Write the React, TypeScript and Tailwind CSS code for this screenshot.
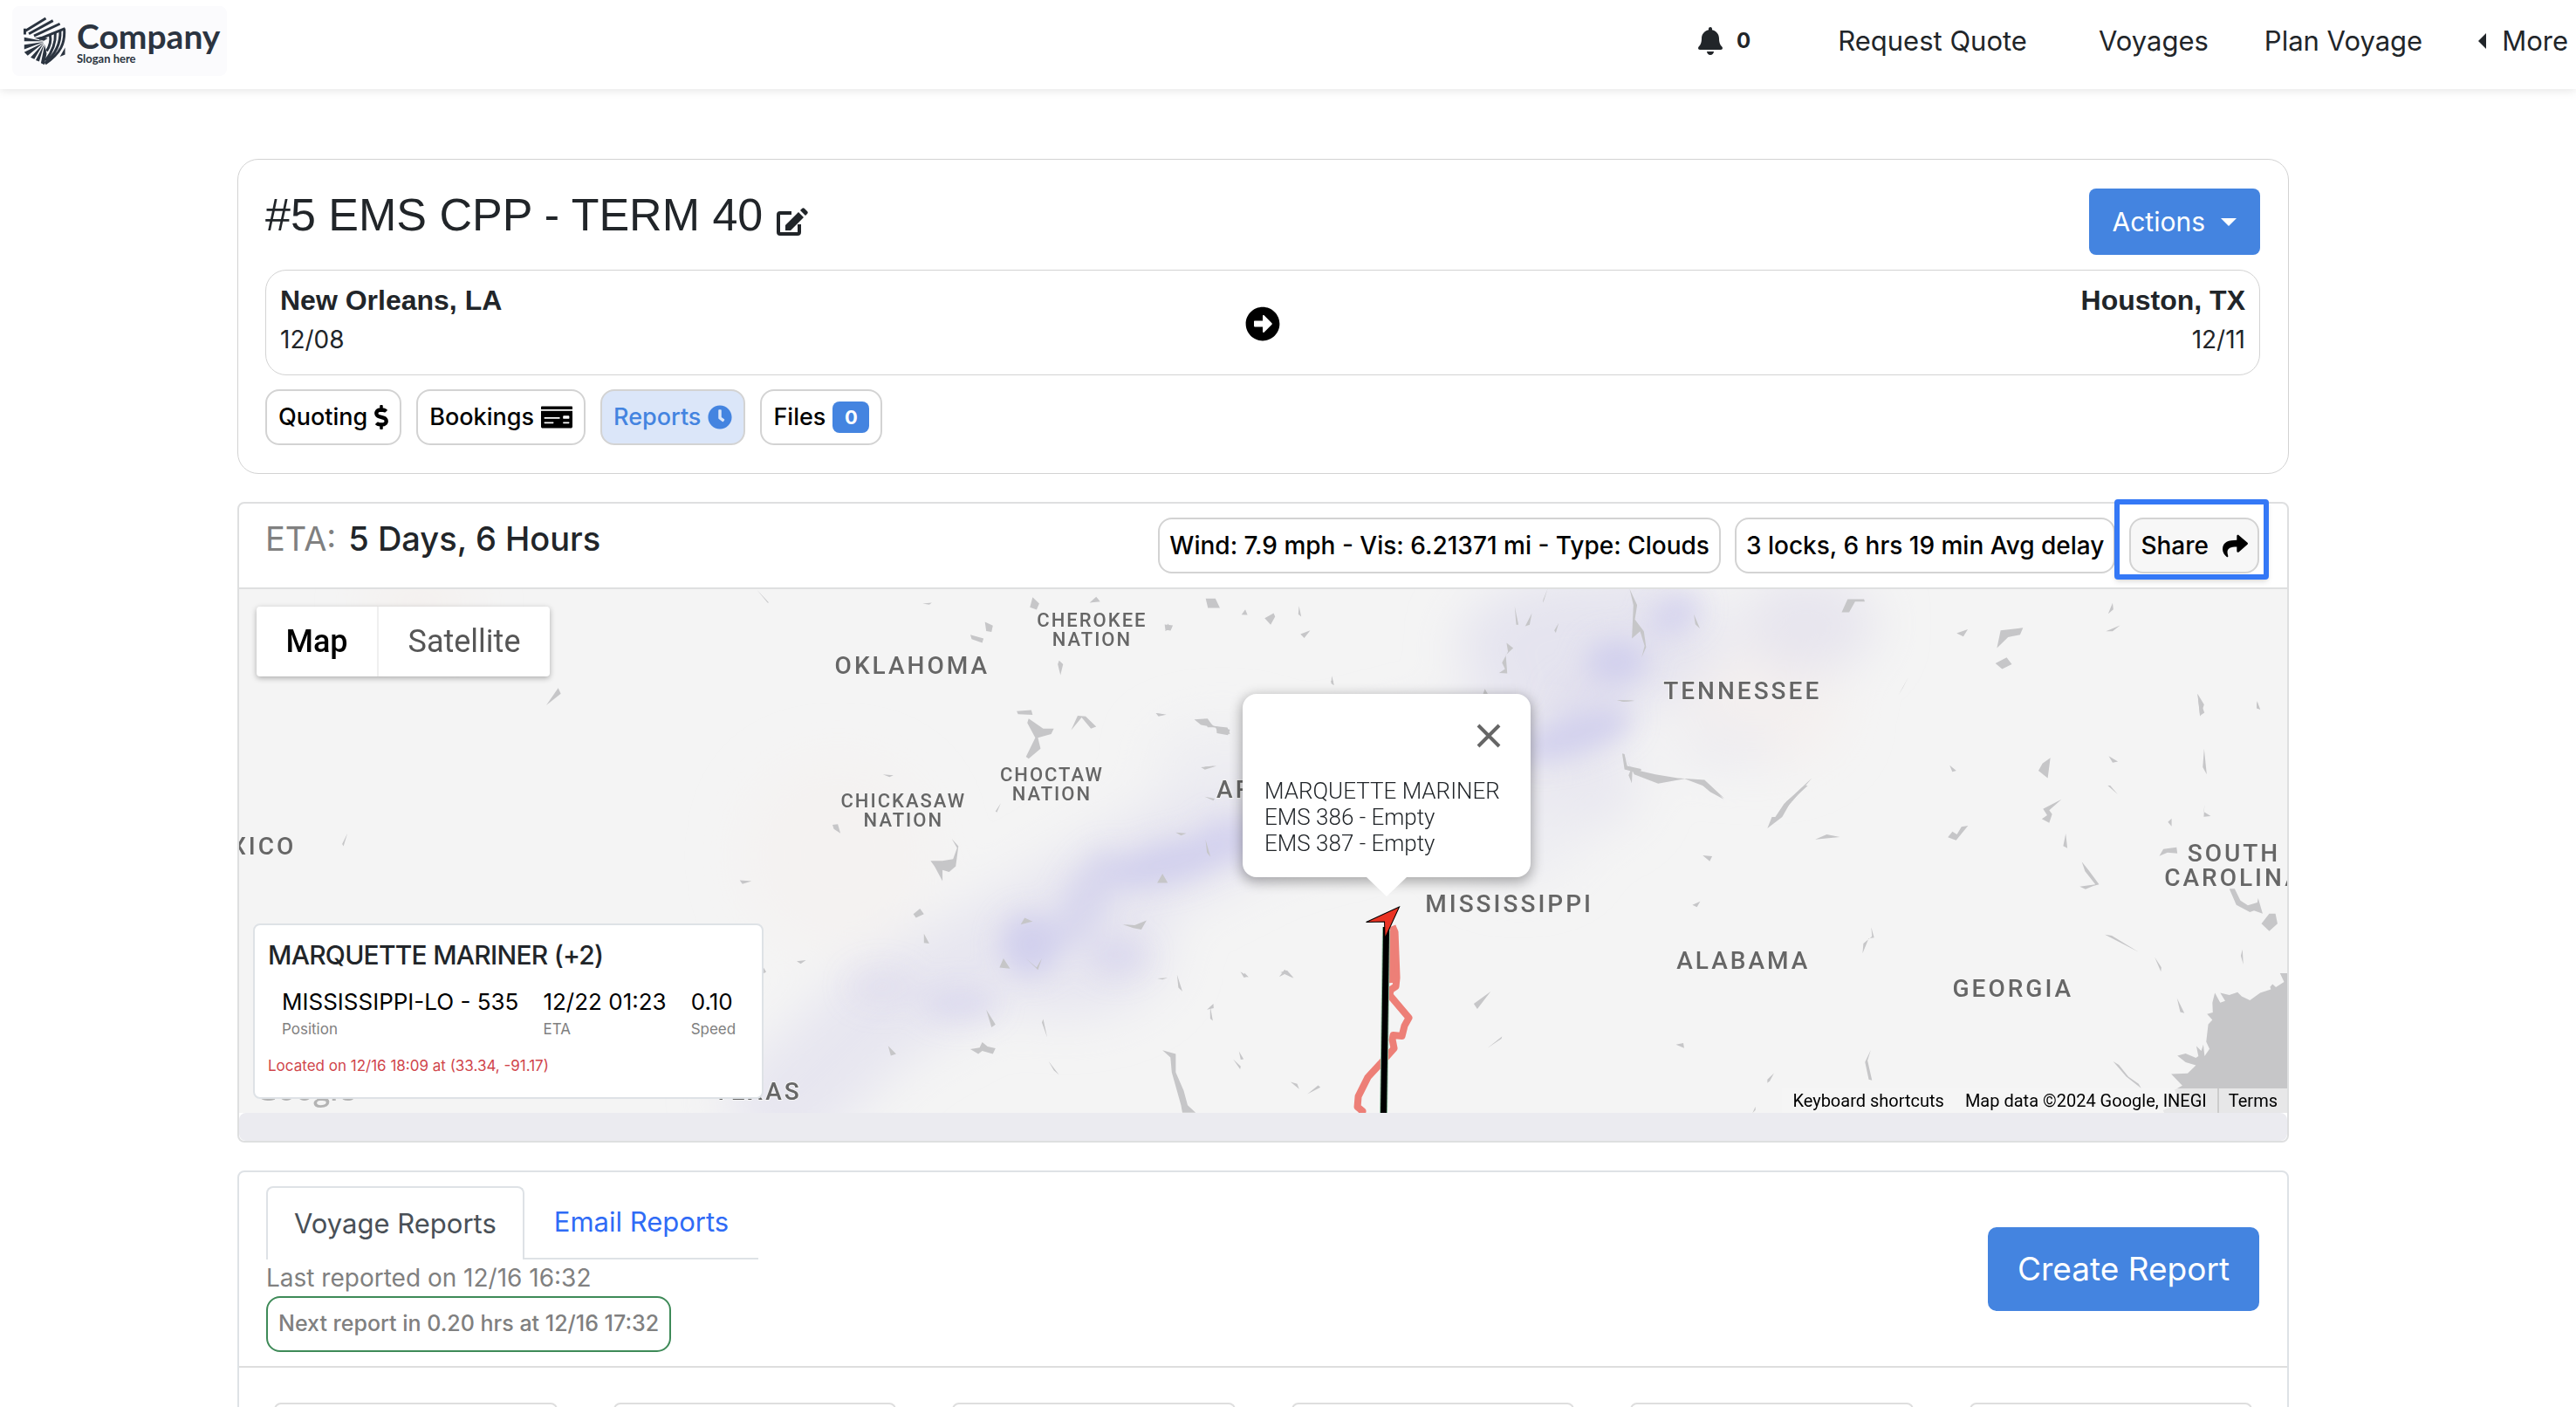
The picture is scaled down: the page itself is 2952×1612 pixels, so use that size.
import type { ReactNode } from 'react'
import {
  FaArrowAltCircleRight,
  FaBell,
  FaClock,
  FaDollarSign,
  FaMoneyCheck,
  FaShare,
} from 'react-icons/fa'

interface MapLabel {
  lines: string[]
  x: number
  y: number
  small?: boolean
}

const MAP_LABELS: MapLabel[] = [
  { lines: ['CHEROKEE', 'NATION'], x: 1251, y: 718, small: true },
  { lines: ['OKLAHOMA'], x: 1045, y: 772 },
  { lines: ['CHICKASAW', 'NATION'], x: 1035, y: 925, small: true },
  { lines: ['CHOCTAW', 'NATION'], x: 1205, y: 895, small: true },
  { lines: ['ARKANSAS'], x: 1478, y: 914 },
  { lines: ['NEW MEXICO'], x: 239, y: 979 },
  { lines: ['TENNESSEE'], x: 1996, y: 801 },
  { lines: ['MISSISSIPPI'], x: 1729, y: 1045 },
  { lines: ['ALABAMA'], x: 1997, y: 1110 },
  { lines: ['GEORGIA'], x: 2306, y: 1142 },
  { lines: ['SOUTH', 'CAROLINA'], x: 2559, y: 987 },
  { lines: ['TEXAS'], x: 868, y: 1260 },
]

// Lakes and reservoirs, one path per map tile, in tile-local units
const WATER_TILES = [
  {
    transform: 'translate(260 660) scale(1.518 .421)',
    d: 'M400 38l8 35h1zM525 75l7-2-2 5zM608 58l5 17-2 17-5-7zM656 57l3 13-8 3zM710 130l3 12-5 8zM572 125l6 10-1 17-4-2zM561 160l10 10-1 12-8-10zM628 230l3 10-2 30-2-30zM250 305l2 15-11 32zM596 368l11-3 1 13-11-2zM605 388l11 27h8l-2 15-10 10 2 30-9 27-2-5 7-52-6-40zM642 380l6 2 8 28-4 5-7-30-8 35zM701 373l8 4-6 5zM730 390l10-2 4 20 11 4 2 18-9-5-2-13-11-7zM495 540l8 2-3 5zM735 520l12-3-9 10zM584 618l-3 25-1-3zM457 677l4-2 2 25-5-12zM547 715l5 20-2 55-5 15-5-5v30l-6-40-3-15h9l8-5 3-30zM716 698l8 2-4 6zM706 810l4 25h-8zM91 700l-3 35-1-6zM387 828l9 2-7 8zM523 905l3 15-6 10-2-10zM602 930l6 10-9 8zM676 948l9 2 9-13-4 25-6-4zM526 973l4 27-4-2zM586 1040l5 28-8-3zM603 1040l8 25 4-25-3 32zM430 1048l7-3-4 10zM702 1095l8-2-4 5zM717 1085l4 45-3-10zM768 1080l3 12-4-4zM795 1078l5-5 5 20-5-9zM573 1180l7 40-3 8zM616 1205l3 50-4-40zM499 1278l6 22-4 5zM570 1268l4 12 6 5-2 15-8-8-3 8-6-13 7-4zM620 1320l8 37-4-12zM706 1290l10 10v50l6 50 3 40 6 20h-10l-1-20-7-90-1-40zM742 1170l2 40-2-6zM404 1060l3 17-3 6zM1054 485l6 40 18 15 17 10 20 5 15 50-13-30-17-23-20 13-18-25zM1196 550l-14 60-19 75 12-65zM1300 515l5 15-3 3zM1370 510l6-15-2 55-7-20zM1420 490l7 15-4 3zM1487 320l5 30-3 32zM1532 340l2 20-2 2zM1492 470l2 70-3-20z',
  },
  {
    transform: 'translate(1300 560) scale(.855 .3333)',
    d: 'M95 378h13l6 32H98zM148 415l3 19-8-1zM186 428l2 12-6 28-8-23zM220 403l3 37-4-8zM235 487l-8 26-5-13zM40 467l11 3-3 18-7-3zM553 345l-6 48v-10zM264 643l3 32-4-6zM509 405l5 63h-3zM532 428l-3 40-6 5zM568 462l-4 33-2-8zM663 345l10 55-3 50 12 40 3 55-6 35 4-40-6-50-11 25 2-115zM749 432l8 48-6-14zM498 530l9 18-10 24 2 63-11-2 8-13-4-22 8-38zM955 380h22l1 8h-13l-8 37h-10zM881 345l5 10zM1310 393l1 22-7 15zM1320 470l-10 20h-9zM1101 497l15-14-6 25zM1160 487l30-9-4 24-16 8-15 38zM1153 600l15-20 7 23-13 17zM1037 645l-14 65 6-26zM1424 705l9 65-6 10zM1503 732l5 28-5-6zM646 726l24 2-15 4zM28 772l12 3-6 5z',
  },
  {
    transform: 'translate(1900 900) scale(.472 .3333)',
    d: 'M107 0h18l33 47-33-25zM357 0h5l-40 53-22 55-36 39 11-39h13l22-53zM380 185l28-17 32 9zM107 240l23 3-6 17zM82 410l19-12-8 20zM702 178l11-20 11 10 11-26 16-4-29 50zM978 47l-30 38 7 13-7 30-18-13 13-13-10-22zM988 165l4 50-10-7zM1245 113v27l-9-15zM1325 65l-2 25 17 15-17 2zM1215 242l10-24 32-6 2 21-24-3zM1027 262l17 30 25 48-14 5-19 11-14-9 38-7-25-45zM1385 355h13l14 40 18 17 23-10 2-15 11 53-21-10-10 5-33-25zM1463 475l19-35h15l5 35-20 25zM516 487l7 36-13 2-15 52 2-34 21-25zM1083 512l17 4 65 56zM1204 590l16 35-1 15zM1417 563l2 52-6-30zM1258 730l12 35 6 17-10-4zM42 890l18-5 2 17zM515 909l-8 36 11 68-8-3-9-60zM280 988l-10 27-6 7v-12zM1103 948l14 12 23 40 25 25 6 15-36-40zM235 1103v12l-7 10zM1090 0h6l18 30zM1528 645h-20l10 30-20 18-8-11-6 10 2 8-26 12-25 26-20-14-10-14-20 10-22-8 12 28-12 6-13-34-6 34 1 34-14 5 13 20-10 15-5 60 8 25-12 25-3-40-5 22-12-17 5 35-6 6-25-15-20 7 20 23 25 10-20 28-40 2 27 40-19 15 7 20-10 35-25 15 5 15h308z',
  },
  {
    transform: 'translate(1380 780) scale(.3333)',
    d: 'M0 130l30 25 57 13-7 19-38-7-2-20H10zM0 296l37-4-37 10zM0 398l35 7-5 7zM3 545l17 60-12-15zM433 0h9v15zM957 45l6-17 10 17zM1417 67l61 2-38 3zM1435 250l8 2 9 41 48 10v7l-30 2-2 40-11-27 6-15-20-5zM123 1000l27 16-15 4zM256 1018l19-26 30 30-30-14zM8 1130l22-20 1 15zM925 1110l58-42-46 60zM972 1262l50-40-2 8zM118 1273l16 27-10 2zM98 1300l26 25-2 10zM295 1378l23 7 7 18zM353 1420l37-30 8 7z',
  },
]

const SUMMARY_TILES = ['departure', 'arrival', 'distance', 'speed', 'fuel', 'locks']

function CompanyLogo() {
  return (
    <a href="#" className="flex h-20 w-[246px] items-center gap-3 rounded-lg bg-[#fbfbfd] pl-[13px] text-[#2b3440]">
      <svg viewBox="80 42 148 170" className="h-[56px] w-[49px] shrink-0" fill="none" stroke="currentColor">
        <g strokeWidth="9">
          <path d="M84 93l73-45M98 102l84-46M116 109l90-42M134 120l90-37" />
          <path d="M84 84v20M221 84c4 50-12 86-66 122" />
          <path d="M207 92c2 42-14 78-52 112M190 99c2 36-10 66-34 96M172 106c4 22 0 38-12 56" />
        </g>
        <g fill="currentColor" stroke="none">
          <path d="M150 128l-68-14v14zM150 130l-68 10v16zM150 132l-68 34 12 12zM150 134l-46 50 13 6zM152 136l-30 58 12 4z" />
          <path d="M153 140l-13 64 12 6 8-40zM224 150v24l-18 8zM118 116l32 10 14-8-22-6z" />
        </g>
      </svg>
      <span className="flex flex-col font-['Lato'] font-bold">
        <span className="text-[39px] leading-10">Company</span>
        <span className="text-[13px] leading-3">Slogan here</span>
      </span>
    </a>
  )
}

function Header() {
  return (
    <header className="flex h-[102px] items-center justify-between pr-[9px] pb-2 pl-[14px] shadow-[0_2px_10px_rgba(0,0,0,0.1)]">
      <CompanyLogo />
      <nav className="flex items-center text-[31px] leading-10 text-[#212529]">
        <button type="button" aria-label="Notifications" className="mr-[100px] flex items-center gap-4">
          <FaBell className="h-8 w-7" />
          <span className="text-2xl font-bold">0</span>
        </button>
        <a href="#" className="mr-[82px]">Request Quote</a>
        <a href="#" className="mr-16">Voyages</a>
        <a href="#" className="mr-16">Plan Voyage</a>
        <button type="button" className="flex items-center gap-[18px]">
          <span className="size-0 border-y-[9px] border-r-[9px] border-y-transparent border-r-[#212529]" />
          More
        </button>
      </nav>
    </header>
  )
}

function EditIcon() {
  return (
    <svg viewBox="0 0 36 32" className="h-8 w-9" fill="currentColor">
      <path
        d="M17 6H4a2 2 0 0 0-2 2v20a2 2 0 0 0 2 2h20a2 2 0 0 0 2-2v-9"
        fill="none"
        stroke="currentColor"
        strokeWidth="4"
      />
      <path d="M10 26v-6L25 5l6 6-15 15zM27 3l2-2q1.500-1.500 3 0l3 3q1.500 1.500 0 3l-2 2z" />
    </svg>
  )
}

interface PillProps {
  children: ReactNode
  active?: boolean
  className?: string
}

function Pill({ children, active = false, className = '' }: PillProps) {
  return (
    <button
      type="button"
      className={`flex h-16 items-center rounded-2xl border-2 border-[#d3d3d3] font-medium whitespace-nowrap ${
        active ? 'bg-[#dbe6f9] text-[#4484e0]' : 'text-black'
      } ${className}`}
    >
      {children}
    </button>
  )
}

function VoyageCard() {
  return (
    <section className="rounded-3xl border border-[#d3d3d3] pt-[33px] pr-8 pb-8 pl-[31px]">
      <div className="flex h-[76px] items-start justify-between">
        <div className="flex items-center gap-4 text-[#212529]">
          <h1 className="font-['Liberation_Sans'] text-[52px] leading-[60px]">#5 EMS CPP - TERM 40</h1>
          <button type="button" aria-label="Rename voyage" className="pt-4">
            <EditIcon />
          </button>
        </div>
        <button
          type="button"
          className="flex h-[76px] items-center gap-[18px] rounded-lg bg-[#4484e0] px-[27px] text-[30px] text-white"
        >
          Actions
          <span className="size-0 border-x-[9px] border-t-[9px] border-x-transparent border-t-white" />
        </button>
      </div>

      <div className="mt-[17px] flex items-center justify-between rounded-3xl border border-[#d3d3d3] px-4 pt-[14px] pb-[15px] text-[#212529]">
        <div className="flex-1">
          <p className="font-['Liberation_Sans'] text-[32px] leading-10 font-bold">New Orleans, LA</p>
          <p className="text-[28px] leading-[50px]">12/08</p>
        </div>
        <FaArrowAltCircleRight className="mt-1 size-10 text-black" />
        <div className="flex-1 text-right">
          <p className="font-['Liberation_Sans'] text-[32px] leading-10 font-bold">Houston, TX</p>
          <p className="text-[28px] leading-[50px]">12/11</p>
        </div>
      </div>

      <div className="mt-4 flex gap-[17px] text-[27px]">
        <Pill className="gap-2 px-[13px]">
          Quoting <FaDollarSign className="h-7 w-4" />
        </Pill>
        <Pill className="gap-2 px-[13px]">
          Bookings <FaMoneyCheck className="size-9" />
        </Pill>
        <Pill active className="gap-2 px-[13px]">
          Reports <FaClock className="size-7" />
        </Pill>
        <Pill className="gap-2 px-[13px]">
          Files
          <span className="flex h-9 w-[42px] items-center justify-center rounded-lg bg-[#4484e0] text-[22px] font-bold text-white">
            0
          </span>
        </Pill>
      </div>
    </section>
  )
}

function MapCanvas() {
  return (
    <svg
      viewBox="274 675 2346 600"
      preserveAspectRatio="xMidYMid slice"
      className="absolute inset-0 size-full bg-[#f4f4f4]"
      role="img"
      aria-label="Voyage map"
    >
      <defs>
        <filter id="haze" x="-50%" y="-50%" width="200%" height="200%">
          <feGaussianBlur stdDeviation="28" />
        </filter>
        <filter id="rain" x="-50%" y="-50%" width="200%" height="200%">
          <feGaussianBlur stdDeviation="15" />
        </filter>
      </defs>

      {/* Precipitation overlay */}
      <g filter="url(#haze)">
        <ellipse cx="480" cy="690" rx="60" ry="24" fill="#f4efec" />
        <ellipse cx="960" cy="980" rx="110" ry="110" fill="#f4f2f1" />
        <ellipse cx="2020" cy="810" rx="90" ry="70" fill="#f4f0ef" />
        <path
          d="M860 1300L1010 1160 1160 1080 1300 1000 1440 930 1600 890 1760 850 1840 760 1940 680"
          fill="none"
          stroke="#e7e6f0"
          strokeWidth="120"
          strokeLinejoin="round"
        />
        <ellipse cx="1220" cy="1090" rx="120" ry="75" fill="#e7e6f0" />
        <ellipse cx="1820" cy="740" rx="150" ry="80" fill="#e5e4ef" />
        <ellipse cx="1780" cy="900" rx="100" ry="60" fill="#e9e8f0" />
        <ellipse cx="1740" cy="960" rx="70" ry="50" fill="#ededf2" />
        <ellipse cx="2070" cy="715" rx="80" ry="55" fill="#e7e5ee" />
        <ellipse cx="1975" cy="855" rx="60" ry="22" fill="#ebeaf0" />
        <ellipse cx="1400" cy="870" rx="80" ry="40" fill="#eeeef2" />
      </g>
      <g filter="url(#rain)" fill="#d2d0ed">
        <ellipse cx="1180" cy="1082" rx="34" ry="36" />
        <ellipse cx="1245" cy="1030" rx="26" ry="64" transform="rotate(28 1245 1030)" opacity=".7" />
        <ellipse cx="1340" cy="988" rx="74" ry="24" transform="rotate(-14 1340 988)" />
        <ellipse cx="1415" cy="962" rx="44" ry="26" opacity=".8" />
        <ellipse cx="1280" cy="1095" rx="34" ry="24" opacity=".5" />
        <ellipse cx="1100" cy="1150" rx="44" ry="20" opacity=".5" />
        <ellipse cx="1010" cy="1130" rx="40" ry="24" opacity=".25" />
        <ellipse cx="1805" cy="842" rx="68" ry="22" transform="rotate(-18 1805 842)" />
        <ellipse cx="1852" cy="758" rx="36" ry="26" />
        <ellipse cx="1820" cy="800" rx="44" ry="30" opacity=".25" />
        <ellipse cx="1918" cy="705" rx="32" ry="20" transform="rotate(-30 1918 705)" opacity=".8" />
      </g>

      <g fill="#c6c6c8">
        {WATER_TILES.map((tile) => (
          <path key={tile.transform} d={tile.d} transform={tile.transform} />
        ))}
      </g>

      <g
        className="font-['Roboto'] font-medium"
        textAnchor="middle"
        fill="#666"
        stroke="#f4f4f4"
        strokeWidth="2"
        paintOrder="stroke"
      >
        {MAP_LABELS.map(({ lines, x, y, small }) => (
          <text
            key={lines.join(' ')}
            className={small ? 'text-[22px] tracking-[2px]' : 'text-[28px] tracking-[3px]'}
          >
            {lines.map((line, i) => (
              <tspan key={line} x={x} y={y + i * (small ? 22 : 28)}>
                {line}
              </tspan>
            ))}
          </text>
        ))}
      </g>
      <text x="293" y="1261" className="font-['Open_Sans'] text-[34px] font-semibold" fill="#b3b3b3">
        Google
      </text>

      {/* Planned route, sailed track and vessel heading */}
      <path
        d="M1595 1061l3 7 2 52-1 10-6 4-1 6 22 26-5 9-3 12-10-1-1 5 2 10-16 18-14 15-11 22-1 12 6 5-5 15"
        fill="none"
        stroke="#ed7f77"
        strokeWidth="8"
        strokeLinejoin="round"
      />
      <path d="M1592 1066l3 60" stroke="#ed7f77" strokeWidth="8" />
      <path d="M1588 1062l-3 213" stroke="#8fc0a0" strokeWidth="9" />
      <path d="M1588 1062l-3 213" stroke="#000" strokeWidth="7" />
      <path d="M1603 1039l-38 17.500 21-.5.5 19z" fill="#ea3323" stroke="#000" />
    </svg>
  )
}

function VesselPopup() {
  return (
    <div className="absolute top-[120px] left-[49%] h-[210px] w-[330px] rounded-2xl bg-white px-[25px] shadow-[0_4px_14px_2px_rgba(0,0,0,0.3)]">
      <button type="button" aria-label="Close" className="mt-[34px] mr-[9px] ml-auto block text-[#666]">
        <svg viewBox="0 0 28 28" className="size-7" stroke="currentColor" strokeWidth="4">
          <path d="M2 2l24 24M26 2L2 26" />
        </svg>
      </button>
      <p className="mt-[34px] font-['Roboto'] text-[26px] leading-[30px] font-light whitespace-nowrap text-[#212529]">
        MARQUETTE MARINER
        <br />
        EMS 386 - Empty
        <br />
        EMS 387 - Empty
      </p>
      <span className="absolute top-full left-1/2 size-0 -translate-x-1/2 border-x-[23px] border-t-[22px] border-x-transparent border-t-white" />
    </div>
  )
}

function VesselPanel() {
  const stats = [
    { value: 'MISSISSIPPI-LO - 535', label: 'Position' },
    { value: '12/22 01:23', label: 'ETA' },
    { value: '0.10', label: 'Speed' },
  ]

  return (
    <div className="absolute bottom-4 left-4 h-[201px] w-[585px] rounded-lg border-2 border-[#dee2e6] bg-white pt-[14px] pl-[15px]">
      <h3 className="text-[30px] leading-10 font-medium tracking-tight text-[#212529]">MARQUETTE MARINER (+2)</h3>
      <dl className="mt-4 ml-4 flex gap-7">
        {stats.map((stat) => (
          <div key={stat.label} className="flex flex-col-reverse">
            <dt className="text-[17px] leading-[26px] text-[#808080]">{stat.label}</dt>
            <dd className="text-[26px] leading-9 whitespace-nowrap text-black">{stat.value}</dd>
          </div>
        ))}
      </dl>
      <p className="mt-[17px] text-[17px] leading-6 text-[#d0454b]">Located on 12/16 18:09 at (33.34, -91.17)</p>
    </div>
  )
}

function MapCard() {
  return (
    <section className="mt-8 rounded-lg border-2 border-[#dedfe0]">
      <div className="flex h-24 items-start justify-between pr-8 pl-[30px]">
        <h2 className="mt-4 text-[38px] leading-[48px] font-medium text-[#212529]">
          <span className="mr-[14px] font-normal text-[#808080]">ETA:</span>5 Days, 6 Hours
        </h2>
        <div className="mt-4 flex gap-4 text-[28px]">
          <Pill className="px-[11px]">Wind: 7.9 mph - Vis: 6.21371 mi - Type: Clouds</Pill>
          <Pill className="px-[11px]">3 locks, 6 hrs 19 min Avg delay</Pill>
          <div className="relative">
            <Pill className="gap-4 bg-[#f7f7f7] px-[11px]">
              Share <FaShare className="size-[29px]" />
            </Pill>
            {/* Coach mark around the share action */}
            <span className="pointer-events-none absolute -top-[21px] -right-[11px] -bottom-[7px] -left-[17px] rounded border-[6px] border-[#3478f6] shadow-md" />
          </div>
        </div>
      </div>

      <div className="relative h-[602px] overflow-hidden border-t-2 border-[#dedfe0]">
        <MapCanvas />

        <div className="absolute top-5 left-5 flex rounded bg-white font-['Roboto'] text-[36px] leading-[80px] shadow-[0_2px_6px_rgba(0,0,0,0.3)]">
          <button type="button" className="w-[138px] font-medium text-black">Map</button>
          <button type="button" className="w-[198px] border-l-2 border-[#efefef] text-[#565656]">Satellite</button>
        </div>

        <VesselPopup />
        <VesselPanel />

        <div className="absolute right-0 bottom-0 flex h-7 items-center bg-[#f5f5f5]/70 font-['Roboto'] text-xl text-black">
          <button type="button" className="px-3">Keyboard shortcuts</button>
          <span className="px-3">Map data ©2024 Google, INEGI</span>
          <a href="#" className="border-l-2 border-[#ccc] px-[11px] leading-7">Terms</a>
        </div>
      </div>
      <div className="h-8 rounded-lg bg-[#ebebf0]" />
    </section>
  )
}

function ReportsCard() {
  return (
    <section className="mt-8 rounded-lg border-2 border-[#dee2e6]">
      <div className="flex h-[222px] items-start justify-between pt-4 pr-8 pl-[31px]">
        <div>
          <div role="tablist" className="flex h-[84px] w-fit text-[31px]">
            <button
              type="button"
              role="tab"
              aria-selected="true"
              className="rounded-t-lg border-2 border-b-0 border-[#dee2e6] px-[30px] text-[#495057]"
            >
              Voyage Reports
            </button>
            <button type="button" role="tab" className="border-b-2 border-[#dee2e6] px-[34px] text-[#2f6bf6]">
              Email Reports
            </button>
          </div>
          <p className="text-[28px] leading-[42px] text-[#808080]">Last reported on 12/16 16:32</p>
          <p className="flex h-16 w-fit items-center rounded-2xl border-2 border-[#3e8a58] px-3 text-[25px] font-medium text-[#808080]">
            Next report in 0.20 hrs at 12/16 17:32
          </p>
        </div>
        <button
          type="button"
          className="mt-[47px] h-24 rounded-[10px] bg-[#4484e0] px-[34px] text-[37px] text-white"
        >
          Create Report
        </button>
      </div>

      <div className="grid grid-cols-6 border-t-2 border-[#dedede] px-2 pt-10">
        {SUMMARY_TILES.map((tile) => (
          <div key={tile} className="mx-8 h-40 rounded-lg border-2 border-[#dedede]" />
        ))}
      </div>
    </section>
  )
}

export default function App() {
  return (
    <div className="h-screen overflow-hidden bg-white font-['Inter',sans-serif]">
      <Header />
      <main className="pt-20 pr-[329px] pl-[272px]">
        <VoyageCard />
        <MapCard />
        <ReportsCard />
      </main>
    </div>
  )
}
